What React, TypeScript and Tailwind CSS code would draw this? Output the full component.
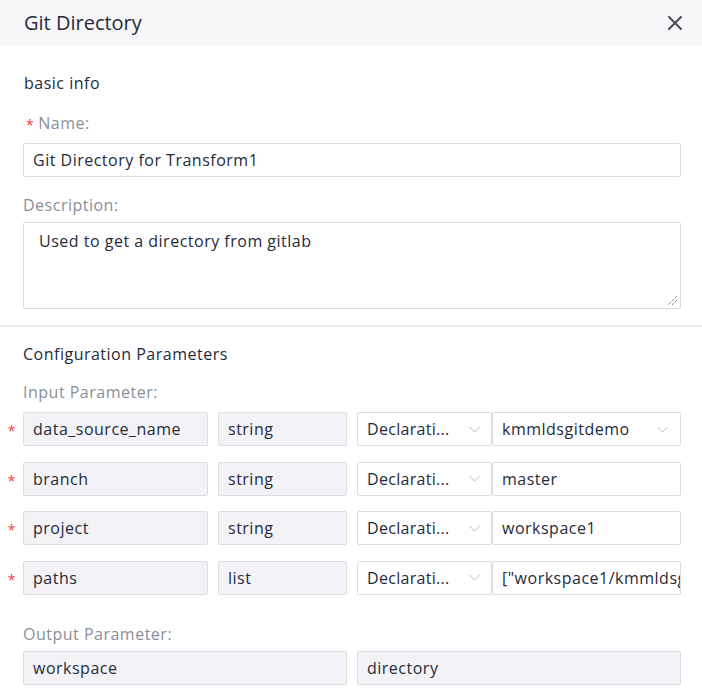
import React from "react";

const font = { fontFamily: '"Open Sans", "Noto Sans", sans-serif' };

function Chevron() {
  return (
    <svg width="11" height="7" viewBox="0 0 11 7" fill="none" className="shrink-0">
      <path d="M0.5 1 L5.5 6 L10.5 1" stroke="#b8bac2" strokeWidth="1" />
    </svg>
  );
}

function Star({ className = "" }: { className?: string }) {
  return <span className={"text-[#f5403f] text-[14px] leading-none " + className}>*</span>;
}

function GrayBox({ text, className = "" }: { text: string; className?: string }) {
  return (
    <div
      className={
        "h-[34px] shrink-0 rounded-[2px] border border-[#dcdde3] bg-[#f3f3f7] flex items-center px-[9px] text-[16px] tracking-[0.5px] text-[#252b3a] " +
        className
      }
    >
      {text}
    </div>
  );
}

function Row({ name, type, value, select }: { name: string; type: string; value: string; select?: boolean }) {
  return (
    <div className="flex items-center h-[34px]">
      <div className="w-[23px] flex justify-center pt-[4px]">
        <Star />
      </div>
      <GrayBox text={name} className="w-[185px]" />
      <GrayBox text={type} className="w-[129px] ml-[10px]" />
      <div className="ml-[10px] w-[135px] shrink-0 h-[34px] rounded-[2px] border border-[#dcdde3] bg-white flex items-center justify-between pl-[9px] pr-[11px] text-[16px] tracking-[0.3px] text-[#252b3a] whitespace-nowrap">
        <span>Declarati...</span>
        <Chevron />
      </div>
      <div className="w-[189px] shrink-0 h-[34px] rounded-[2px] border border-[#dcdde3] bg-white flex items-center justify-between pl-[9px] pr-[12px] text-[16px] tracking-[0.5px] text-[#252b3a] overflow-hidden whitespace-nowrap">
        <span>{value}</span>
        {select ? <Chevron /> : null}
      </div>
    </div>
  );
}

export default function App() {
  return (
    <div className="w-[702px] h-[692px] bg-white overflow-hidden" style={font}>
      <div className="h-[46px] bg-[#f7f7f9] flex items-center justify-between pl-[24px] pr-[20px]">
        <span className="text-[20px] text-[#252b3a]">Git Directory</span>
        <svg width="14" height="14" viewBox="0 0 14 14" fill="none">
          <path d="M1 1 L13 13 M13 1 L1 13" stroke="#4a4d55" strokeWidth="2" strokeLinecap="round" />
        </svg>
      </div>

      <div className="pl-[23px] pr-[21px] tracking-[0.5px]">
        <div className="pt-[25px] text-[16px] leading-[24px] text-[#252b3a] pl-[1px]">basic info</div>
        <div className="mt-[16px] text-[16px] leading-[24px] text-[#8a8e99] flex items-center">
          <Star className="ml-[3px] mr-[4px] pt-[4px]" />
          <span>Name:</span>
        </div>
        <div className="mt-[8px] h-[34px] rounded-[2px] border border-[#dcdde3] flex items-center px-[9px] text-[16px] text-[#252b3a]">
          Git Directory for Transform1
        </div>
        <div className="mt-[16px] text-[16px] leading-[24px] text-[#8a8e99]">Description:</div>
        <div className="relative mt-[5px] h-[87px] rounded-[2px] border border-[#dcdde3] px-[15px] pt-[6px] text-[16px] text-[#252b3a]">
          Used to get a directory from gitlab
          <svg className="absolute right-[2px] bottom-[2px]" width="11" height="11" viewBox="0 0 11 11">
            <path d="M10 1 L1 10 M10 5 L5 10" stroke="#555" strokeWidth="1" strokeDasharray="1 1" />
          </svg>
        </div>
      </div>

      <div className="mt-[16px] h-[2px] bg-[#ededf1]" />

      <div className="pl-[23px] pr-[21px] tracking-[0.5px]">
        <div className="mt-[15px] text-[16px] leading-[24px] text-[#252b3a]">Configuration Parameters</div>
        <div className="mt-[14px] text-[16px] leading-[24px] text-[#8a8e99]">Input Parameter:</div>
      </div>

      <div className="mt-[8px] flex flex-col gap-[15.5px]">
        <Row name="data_source_name" type="string" value="kmmldsgitdemo" select />
        <Row name="branch" type="string" value="master" />
        <Row name="project" type="string" value="workspace1" />
        <Row name="paths" type="list" value={'["workspace1/kmmldsgitdemo"]'} />
      </div>

      <div className="pl-[23px] pr-[21px]">
        <div className="mt-[27px] text-[16px] leading-[24px] tracking-[0.5px] text-[#8a8e99]">Output Parameter:</div>
        <div className="mt-[5px] flex gap-[10px]">
          <GrayBox text="workspace" className="w-[324px]" />
          <GrayBox text="directory" className="w-[324px]" />
        </div>
      </div>
    </div>
  );
}
